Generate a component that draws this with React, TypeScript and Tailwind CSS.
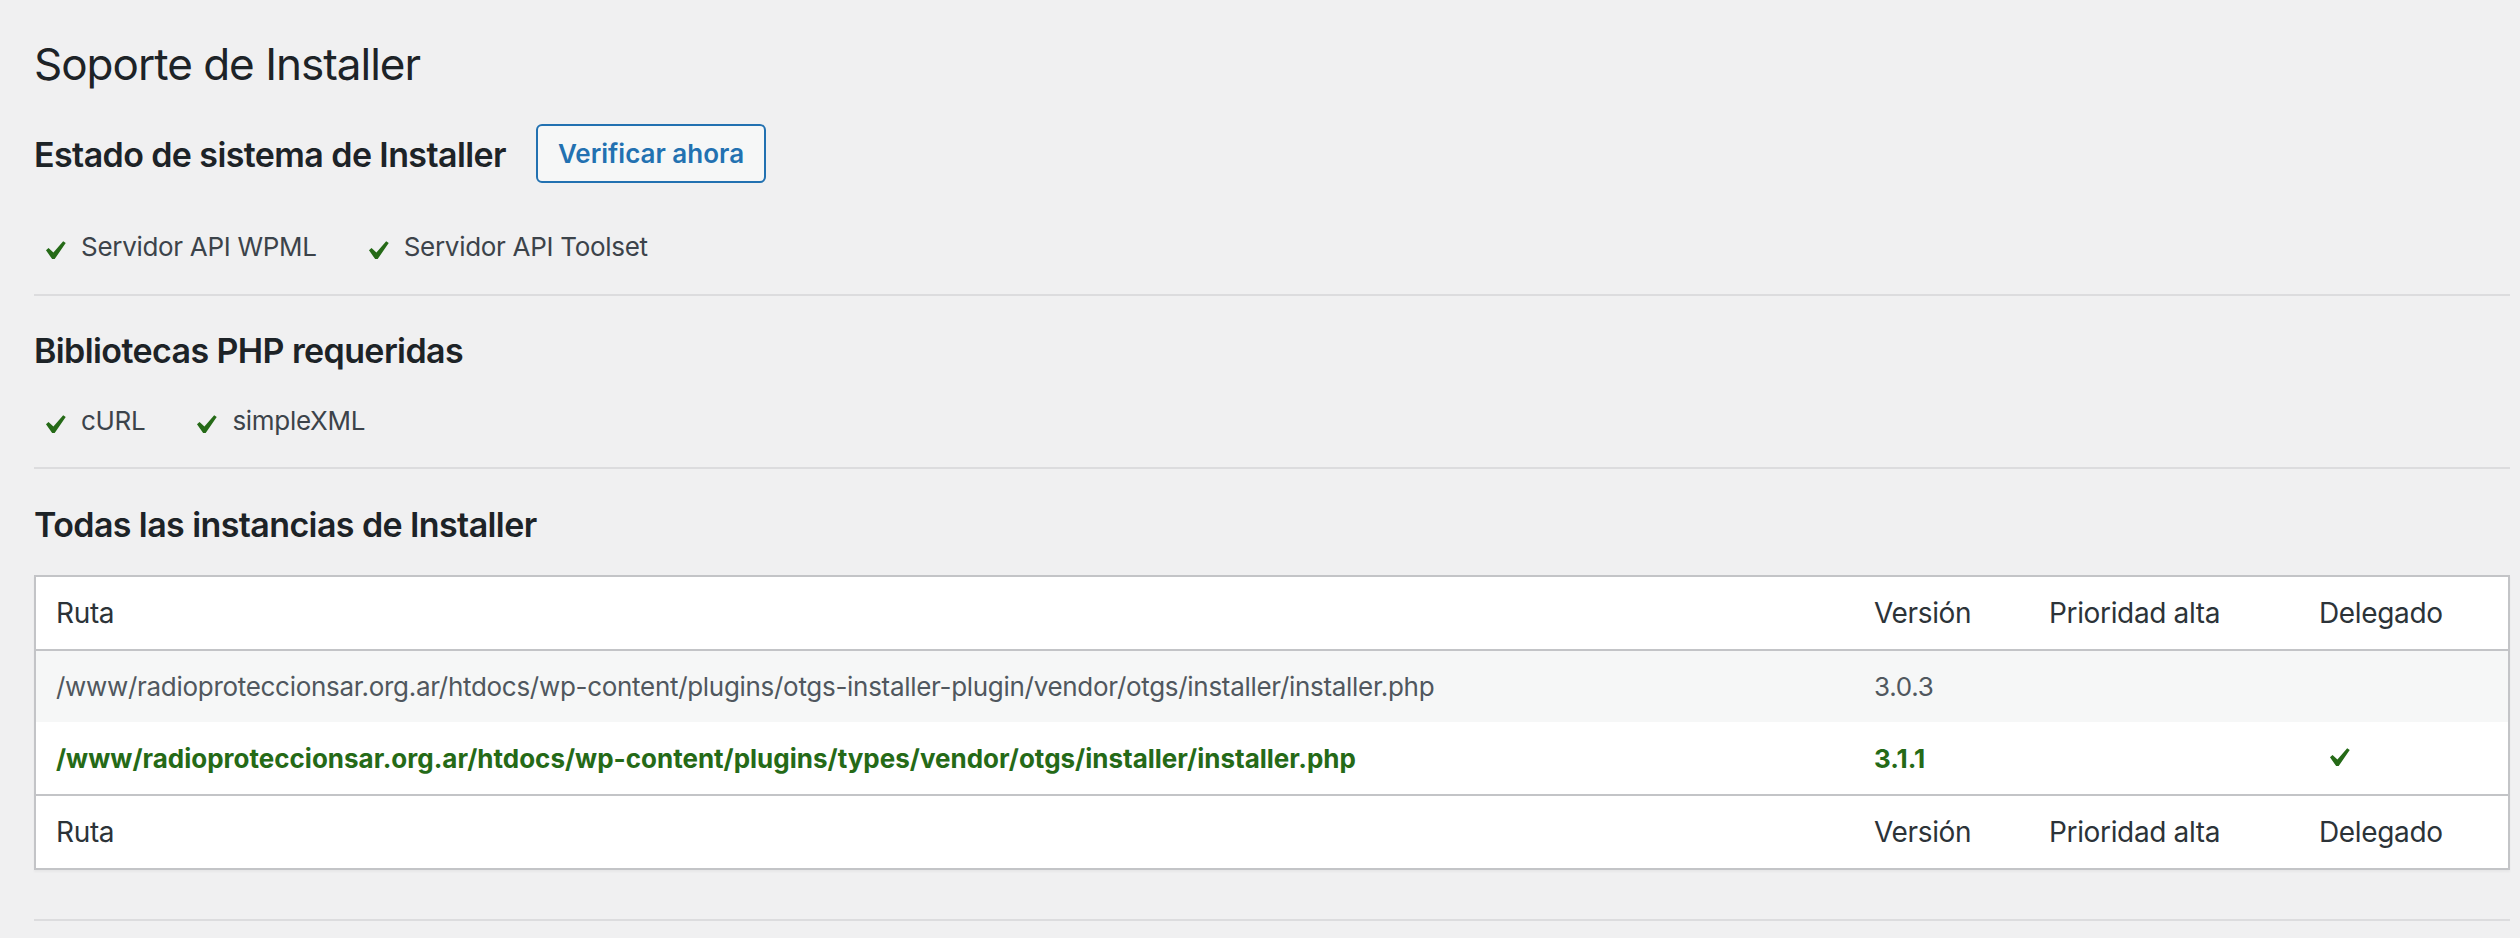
import React from "react";

const GREEN = "#256a17";

function Check({ className = "" }: { className?: string }) {
  // dashicons "yes" glyph
  return (
    <svg
      viewBox="0 0 20 20"
      width={38}
      height={38}
      className={`shrink-0 ${className}`}
      aria-hidden="true"
    >
      <path
        d="M14.83 4.89l1.34.94-5.81 8.38H9.02L5.78 9.67l1.34-1.25 2.57 2.4z"
        fill={GREEN}
      />
    </svg>
  );
}

function StatusList({ items }: { items: string[] }) {
  return (
    <div className="flex items-start">
      {items.map((label) => (
        <div key={label} className="mr-[40px] flex items-start">
          <Check className="ml-[1px] mt-[1px]" />
          <span className="ml-[8px] text-[26px] leading-[32px] tracking-[-0.3px] text-[#3c434a]">
            {label}
          </span>
        </div>
      ))}
    </div>
  );
}

function Divider({ className = "" }: { className?: string }) {
  return <div className={`h-[2px] bg-[#dcdcde] ${className}`} />;
}

const cols = "grid grid-cols-[1fr_175px_270px_209px]";

function HeaderRow({ border }: { border: string }) {
  return (
    <div
      className={`${cols} h-[74px] bg-white ${border} border-[#c3c4c7] text-[28px] tracking-[-0.35px] text-[#2c3338]`}
    >
      <div className="flex items-center px-[20px]">Ruta</div>
      <div className="flex items-center px-[20px]">Versión</div>
      <div className="flex items-center px-[20px]">Prioridad alta</div>
      <div className="flex items-center px-[20px]">Delegado</div>
    </div>
  );
}

export default function App() {
  return (
    <div className="min-h-screen bg-[#f0f0f1] pl-[34px] pr-[10px] pb-[18px] font-['Inter',sans-serif] text-[#3c434a]">
      <h1 className="pt-[34px] text-[44px] leading-[60px] font-normal tracking-[-1px] text-[#1d2327]">
        Soporte de Installer
      </h1>

      <div className="mt-[30px] flex items-start">
        <h2 className="mt-[9px] text-[34px] leading-[44px] font-semibold tracking-[-0.6px] text-[#1d2327]">
          Estado de sistema de Installer
        </h2>
        <button
          type="button"
          className="ml-[30px] flex h-[59px] items-center rounded-[6px] border-2 border-[#2271b1] bg-[#f6f7f7] px-[20px] text-[26px] font-semibold text-[#2271b1]"
        >
          Verificar ahora
        </button>
      </div>

      <div className="mt-[48px]">
        <StatusList items={["Servidor API WPML", "Servidor API Toolset"]} />
      </div>

      <Divider className="mt-[24px]" />

      <h2 className="mt-[33px] text-[34px] leading-[44px] font-semibold tracking-[-0.6px] text-[#1d2327]">
        Bibliotecas PHP requeridas
      </h2>

      <div className="mt-[32px]">
        <StatusList items={["cURL", "simpleXML"]} />
      </div>

      <Divider className="mt-[23px]" />

      <h2 className="mt-[34px] text-[34px] leading-[44px] font-semibold tracking-[-0.6px] text-[#1d2327]">
        Todas las instancias de Installer
      </h2>

      <div className="mt-[28px] border-2 border-[#c3c4c7] bg-white shadow-[0_2px_2px_rgba(0,0,0,0.04)]">
        <HeaderRow border="border-b-2" />

        <div className={`${cols} h-[71px] bg-[#f6f7f7] text-[26px] tracking-[-0.3px] text-[#50575e]`}>
          <div className="flex items-center px-[20px] whitespace-nowrap">
            /www/radioproteccionsar.org.ar/htdocs/wp-content/plugins/otgs-installer-plugin/vendor/otgs/installer/installer.php
          </div>
          <div className="flex items-center px-[20px]">3.0.3</div>
          <div className="px-[20px]" />
          <div className="px-[20px]" />
        </div>

        <div className={`${cols} h-[72px] bg-white text-[26px] font-bold text-[#256a17]`}>
          <div className="flex items-center px-[20px] whitespace-nowrap">
            /www/radioproteccionsar.org.ar/htdocs/wp-content/plugins/types/vendor/otgs/installer/installer.php
          </div>
          <div className="flex items-center px-[20px]">3.1.1</div>
          <div className="px-[20px]" />
          <div className="flex items-center px-[20px]">
            <Check />
          </div>
        </div>

        <HeaderRow border="border-t-2" />
      </div>

      <Divider className="mt-[49px]" />
    </div>
  );
}
